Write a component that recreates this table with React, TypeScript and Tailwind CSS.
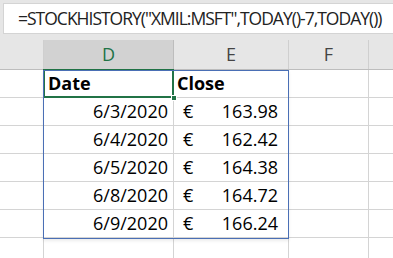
const rows = [
  { date: "6/3/2020", close: "163.98" },
  { date: "6/4/2020", close: "162.42" },
  { date: "6/5/2020", close: "164.38" },
  { date: "6/8/2020", close: "164.72" },
  { date: "6/9/2020", close: "166.24" },
];

const line = "border-[#d4d4d4]";

const App = () => {
  return (
    <div className="w-[393px] h-[258px] overflow-hidden bg-white font-['Open_Sans',sans-serif] text-[18px] text-black">
      {/* formula bar */}
      <div className="h-[40px] bg-[#e6e6e6] pt-[3px] pl-[3px]">
        <div className="h-[31px] bg-white border border-r-0 border-[#d4d4d4] flex items-center pl-[14px] text-[17.5px] tracking-[-1px] text-[#222] whitespace-nowrap">
          =STOCKHISTORY("XMIL:MSFT",TODAY()-7,TODAY())
        </div>
      </div>

      <div className="relative">
        {/* column headers */}
        <div className="flex h-[30px] bg-[#e6e6e6] border-b border-[#bdbdbd] text-[#444]">
          <div className="w-[44px] border-r border-[#cfcfcf]" />
          <div className="w-[130px] border-r border-[#bdbdbd] bg-[#d2d2d2] text-[#217346] flex items-center justify-center">
            D
          </div>
          <div className="w-[115px] border-r border-[#cfcfcf] flex items-center justify-center">
            E
          </div>
          <div className="w-[80px] border-r border-[#cfcfcf] flex items-center justify-center">
            F
          </div>
          <div className="flex-1" />
        </div>

        {/* header row */}
        <div className={`flex h-[28px] border-b ${line} font-bold`}>
          <div className={`w-[44px] border-r ${line}`} />
          <div className={`relative w-[130px] border-r ${line} flex items-center pl-[4px]`}>
            Date
            <div className="absolute -left-px -top-px -right-px -bottom-px border-2 border-[#217346]" />
            <div className="absolute -right-[4px] -bottom-[4px] w-[6px] h-[6px] bg-[#217346] border border-white z-10" />
          </div>
          <div className={`w-[115px] border-r ${line} flex items-center pl-[3px]`}>Close</div>
          <div className={`w-[80px] border-r ${line}`} />
          <div className="flex-1" />
        </div>

        {rows.map((r) => (
          <div key={r.date} className={`flex h-[28px] border-b ${line}`}>
            <div className={`w-[44px] border-r ${line}`} />
            <div className={`w-[130px] border-r ${line} flex items-center justify-end pr-[5px]`}>
              {r.date}
            </div>
            <div className={`w-[115px] border-r ${line} flex items-center justify-between pl-[9px] pr-[10px]`}>
              <span>€</span>
              <span>{r.close}</span>
            </div>
            <div className={`w-[80px] border-r ${line}`} />
            <div className="flex-1" />
          </div>
        ))}

        <div className={`flex h-[28px] border-b ${line}`}>
          <div className={`w-[44px] border-r ${line}`} />
          <div className={`w-[130px] border-r ${line}`} />
          <div className={`w-[115px] border-r ${line}`} />
          <div className={`w-[80px] border-r ${line}`} />
          <div className="flex-1" />
        </div>

        {/* spill range outline */}
        <div className="absolute left-[43px] top-[30px] w-[246px] h-[169px] border border-[#4a6fb5] shadow-[0_2px_3px_rgba(0,0,0,0.08)] pointer-events-none" />
      </div>
    </div>
  );
};

export default App;
